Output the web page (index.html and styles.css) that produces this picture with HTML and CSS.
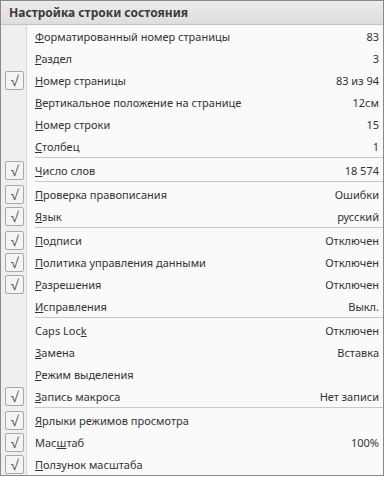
FILE: index.html
```html
<!DOCTYPE html>
<html>
<head>
    <title>Настройка строки состояния</title>
    <link rel="stylesheet" href="styles.css">
</head>
<body>
    <div class="menu">
        <div class="menu-header">Настройка строки состояния</div>
        <div class="menu-body">
            <div class="item"><span class="check"></span><span class="label"><u>Ф</u>орматированный номер страницы</span><span class="value">83</span></div>
            <div class="item"><span class="check"></span><span class="label"><u>Р</u>аздел</span><span class="value">3</span></div>
            <div class="item"><span class="check on">√</span><span class="label"><u>Н</u>омер страницы</span><span class="value">83 из 94</span></div>
            <div class="item"><span class="check"></span><span class="label"><u>В</u>ертикальное положение на странице</span><span class="value">12см</span></div>
            <div class="item"><span class="check"></span><span class="label"><u>Н</u>омер строки</span><span class="value">15</span></div>
            <div class="item"><span class="check"></span><span class="label"><u>С</u>толбец</span><span class="value">1</span></div>
            <div class="sep"></div>
            <div class="item"><span class="check on">√</span><span class="label"><u>Ч</u>исло слов</span><span class="value">18 574</span></div>
            <div class="sep"></div>
            <div class="item"><span class="check on">√</span><span class="label"><u>П</u>роверка правописания</span><span class="value">Ошибки</span></div>
            <div class="item"><span class="check on">√</span><span class="label"><u>Я</u>зык</span><span class="value">русский</span></div>
            <div class="sep"></div>
            <div class="item"><span class="check on">√</span><span class="label"><u>П</u>одписи</span><span class="value">Отключен</span></div>
            <div class="item"><span class="check on">√</span><span class="label"><u>П</u>олитика управления данными</span><span class="value">Отключен</span></div>
            <div class="item"><span class="check on">√</span><span class="label"><u>Р</u>азрешения</span><span class="value">Отключен</span></div>
            <div class="item"><span class="check"></span><span class="label"><u>И</u>справления</span><span class="value">Выкл.</span></div>
            <div class="sep"></div>
            <div class="item"><span class="check"></span><span class="label">Caps Loc<u>k</u></span><span class="value">Отключен</span></div>
            <div class="item"><span class="check"></span><span class="label"><u>З</u>амена</span><span class="value">Вставка</span></div>
            <div class="item"><span class="check"></span><span class="label"><u>Р</u>ежим выделения</span><span class="value"></span></div>
            <div class="item"><span class="check on">√</span><span class="label"><u>З</u>апись макроса</span><span class="value">Нет записи</span></div>
            <div class="sep"></div>
            <div class="item"><span class="check on">√</span><span class="label"><u>Я</u>рлыки режимов просмотра</span><span class="value"></span></div>
            <div class="item"><span class="check on">√</span><span class="label">Мас<u>ш</u>таб</span><span class="value">100%</span></div>
            <div class="item"><span class="check on">√</span><span class="label"><u>П</u>олзунок масштаба</span><span class="value"></span></div>
        </div>
    </div>
</body>
</html>
```

FILE: styles.css
```css
body {
    margin: 0;
    font-family: "Noto Sans", "Open Sans", sans-serif;
    font-size: 11px;
    color: #333;
}
.menu {
    width: 382px;
    border: 1px solid #8a8a8a;
    background-color: #fafafa;
}
.menu-header {
    height: 23px;
    line-height: 24px;
    padding-left: 8px;
    font-size: 12px;
    font-weight: bold;
    color: #3a3a3a;
    background: linear-gradient(#ebebeb, #dedede);
    border-bottom: 1px solid #c5c5c5;
}
.menu-body {
    background: linear-gradient(to right, #efefef 25px, #d8d8d8 25px, #d8d8d8 26px, #fafafa 26px);
}
.item {
    display: flex;
    align-items: center;
    height: 22px;
}
.check {
    width: 19px;
    height: 19px;
    margin-left: 4px;
    box-sizing: border-box;
    text-align: center;
    line-height: 18px;
    font-size: 14px;
    color: #555;
}
.check.on {
    border: 1px solid #a8a8a8;
    border-radius: 2px;
    background-color: #f4f4f4;
}
.label {
    flex: 1;
    padding-left: 11px;
}
.value {
    padding-right: 4px;
}
.sep {
    margin: 0 0 1px 34px;
    border-top: 1px solid #c8c8c8;
    height: 0;
}
```
